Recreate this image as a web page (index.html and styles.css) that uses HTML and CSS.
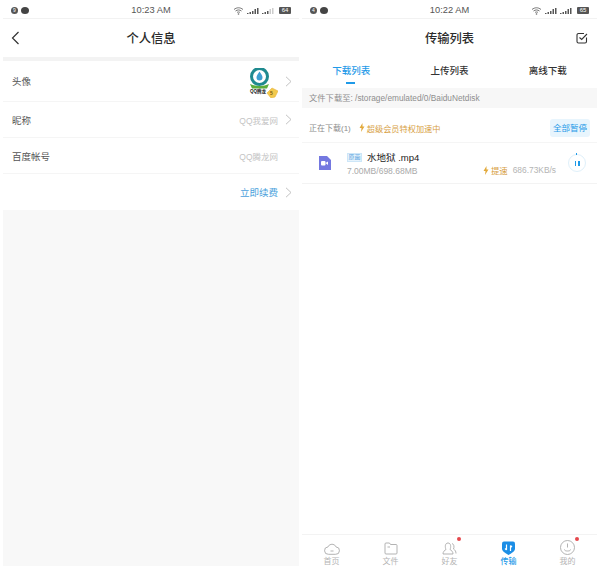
FILE: index.html
```html
<!DOCTYPE html>
<html>
  <head>
    <title>Screens</title>
    <link rel="stylesheet" href="styles.css">
  </head>
  <body>
    <div class="screen screen-left">
      <div class="status">
        <div class="dots"><span class="dot">9</span><span class="dot wide"></span></div>
        <div class="clock">10:23 AM</div>
        <div class="signals">
          <svg width="11" height="8" viewBox="0 0 11 8"><path d="M1 2.5C3.8 .2 7.2 .2 10 2.5M2.500 4C4.400 2.600 6.600 2.600 8.500 4M4 5.500C5 4.800 6 4.800 7 5.500" fill="none" stroke="#666" stroke-width=".9"/><circle cx="5.500" cy="7" r=".8" fill="#666"/></svg>
          <svg width="12" height="6" viewBox="0 0 12 6"><path d="M0 5h1.500v1H0zM2.500 4H4v2H2.500zM5 3h1.500v3H5zM7.500 1H9v5H7.500zM10 0h1.500v6H10z" fill="#555"/></svg>
          <svg width="12" height="6" viewBox="0 0 12 6"><path d="M0 5h1.500v1H0zM2.500 4H4v2H2.500zM5 3h1.500v3H5z" fill="#555"/><path d="M7.500 1H9v5H7.500zM10 0h1.500v6H10z" fill="#ccc"/></svg>
          <span class="battery">64</span>
        </div>
      </div>
      <div class="head">
        <svg class="back" width="9" height="14" viewBox="0 0 9 14"><path d="M7.500 1L1.500 7l6 6" fill="none" stroke="#333" stroke-width="1.200"/></svg>
        <div class="title">个人信息</div>
      </div>
      <div class="strip"></div>
      <div class="row row-first">
        <span class="label">头像</span>
        <div class="side">
          <div class="logo">
            <svg width="28" height="30" viewBox="0 0 28 30">
              <path d="M0 16c5 2.500 14 2.500 19 0l-2 4.500H2z" fill="#5cae3c"/>
              <circle cx="9.500" cy="8.500" r="8" fill="#fff" stroke="#1f8a8f" stroke-width="3"/>
              <path d="M9.500 3.500c2 3 3 4.500 3 6a3 3 0 0 1-6 0c0-1.500 1-3 3-6z" fill="#3d9ed0"/>
              <path d="M22 20l6 3-3 6-4 1-4-5z" fill="#f2c94c" stroke="#e8b23a" stroke-width=".6"/>
            </svg>
            <span class="logo-text">QQ腾龙</span>
            <span class="logo-num">5</span>
          </div>
          <svg class="chev" width="7" height="11" viewBox="0 0 7 11"><path d="M1 .8l5 4.700-5 4.700" fill="none" stroke="#bbb" stroke-width=".9"/></svg>
        </div>
      </div>
      <div class="row">
        <span class="label">昵称</span>
        <div class="side">
          <span class="value">QQ我爱网</span>
          <svg class="chev" width="7" height="11" viewBox="0 0 7 11"><path d="M1 .8l5 4.700-5 4.700" fill="none" stroke="#bbb" stroke-width=".9"/></svg>
        </div>
      </div>
      <div class="row">
        <span class="label">百度帐号</span>
        <div class="side">
          <span class="value">QQ腾龙网</span>
          <span class="chev-space"></span>
        </div>
      </div>
      <div class="row row-last">
        <span></span>
        <div class="side">
          <span class="renew">立即续费</span>
          <svg class="chev" width="7" height="11" viewBox="0 0 7 11"><path d="M1 .8l5 4.700-5 4.700" fill="none" stroke="#bbb" stroke-width=".9"/></svg>
        </div>
      </div>
      <div class="fill"></div>
    </div>

    <div class="screen">
      <div class="status">
        <div class="dots"><span class="dot">4</span><span class="dot wide"></span></div>
        <div class="clock">10:22 AM</div>
        <div class="signals">
          <svg width="11" height="8" viewBox="0 0 11 8"><path d="M1 2.500C3.800 .2 7.200 .2 10 2.500M2.500 4C4.400 2.600 6.600 2.600 8.500 4M4 5.500C5 4.800 6 4.800 7 5.500" fill="none" stroke="#666" stroke-width=".9"/><circle cx="5.500" cy="7" r=".8" fill="#666"/></svg>
          <svg width="12" height="6" viewBox="0 0 12 6"><path d="M0 5h1.500v1H0zM2.500 4H4v2H2.500zM5 3h1.500v3H5zM7.500 1H9v5H7.500zM10 0h1.500v6H10z" fill="#555"/></svg>
          <svg width="12" height="6" viewBox="0 0 12 6"><path d="M0 5h1.500v1H0zM2.500 4H4v2H2.500zM5 3h1.500v3H5zM7.500 1H9v5H7.500zM10 0h1.500v6H10z" fill="#555"/></svg>
          <span class="battery">65</span>
        </div>
      </div>
      <div class="head head-top">
        <div class="title">传输列表</div>
        <svg class="check" width="12" height="12" viewBox="0 0 12 12"><path d="M10.500 5.500V9.500a1.500 1.500 0 0 1-1.500 1.500H2.500A1.500 1.500 0 0 1 1 9.500V3a1.500 1.500 0 0 1 1.500-1.500H8" fill="none" stroke="#333" stroke-width="1.100"/><path d="M3.500 5.500l2.200 2L11 2" fill="none" stroke="#333" stroke-width="1.100"/></svg>
      </div>
      <div class="tabs">
        <div class="tab tab-on">下载列表</div>
        <div class="tab">上传列表</div>
        <div class="tab">离线下载</div>
      </div>
      <div class="path">文件下载至: /storage/emulated/0/BaiduNetdisk</div>
      <div class="running">
        <span class="running-label">正在下载(1)</span>
        <svg class="bolt" width="6" height="9" viewBox="0 0 6 9"><path d="M3.500 0L.5 5h2L2 9l3.500-5.500h-2z" fill="#e2a93b"/></svg>
        <span class="vip">超级会员特权加速中</span>
        <span class="pause-all">全部暂停</span>
      </div>
      <div class="item">
        <svg class="file" width="13" height="14" viewBox="0 0 13 14"><path d="M1 0h8l4 4v10H1z" fill="#7478e0"/><rect x="3" y="5" width="4.500" height="4.500" rx="1" fill="#fff"/><path d="M7.500 7l2.500-1.500v3.500z" fill="#fff"/></svg>
        <div class="item-main">
          <div class="item-name"><span class="tag">原画</span>水地狱 .mp4</div>
          <div class="item-size">7.00MB/698.68MB</div>
        </div>
        <div class="item-speed">
          <svg class="bolt" width="6" height="9" viewBox="0 0 6 9"><path d="M3.500 0L.5 5h2L2 9l3.500-5.500h-2z" fill="#e2a93b"/></svg>
          <span class="boost">提速</span>
          <span class="rate">686.73KB/s</span>
        </div>
        <div class="pause"><span></span><span></span></div>
      </div>
      <div class="space"></div>
      <div class="nav">
        <div class="nav-item">
          <svg width="16" height="13" viewBox="0 0 16 13"><path d="M4.500 12.300a3.700 3.700 0 0 1-.5-7.400 4.300 4.300 0 0 1 8 0 3.700 3.700 0 0 1-.5 7.400zM6.500 9h3" fill="none" stroke="#aaa" stroke-width=".9"/></svg>
          <span>首页</span>
        </div>
        <div class="nav-item">
          <svg width="14" height="13" viewBox="0 0 14 13"><path d="M1 2a1 1 0 0 1 1-1h3.500l1 1.500H12a1 1 0 0 1 1 1V11a1 1 0 0 1-1 1H2a1 1 0 0 1-1-1zM3.500 5H6" fill="none" stroke="#aaa" stroke-width=".9"/></svg>
          <span>文件</span>
        </div>
        <div class="nav-item">
          <svg width="15" height="13" viewBox="0 0 15 13"><path d="M1 12c0-2.500 1.500-3.500 3-4.500C2.800 5 3 1 6 1s3.200 4 2 6.500c1.500 1 3 2 3 4.500zM10 1.500c2 .5 2.500 3.500 1.500 5.500 1.500 1 2.500 2.200 2.500 4.500" fill="none" stroke="#aaa" stroke-width=".9"/></svg>
          <span>好友</span>
          <i class="badge"></i>
        </div>
        <div class="nav-item nav-on">
          <svg width="13" height="14" viewBox="0 0 13 14"><path d="M0 2.500Q0 .5 2 .5h9q2 0 2 2V8q0 2.500-6.500 6Q0 10.500 0 8z" fill="#1c8ee6"/><path d="M4.500 3.500V9M3 7.500L4.500 9M8.500 10V4.500M10 6L8.500 4.500" fill="none" stroke="#fff" stroke-width="1.200"/></svg>
          <span>传输</span>
        </div>
        <div class="nav-item">
          <svg width="15" height="15" viewBox="0 0 15 15"><circle cx="7.500" cy="7.500" r="7" fill="none" stroke="#aaa" stroke-width=".9"/><path d="M7.500 3.500V7.500M4.500 9.500c0 1 1 1.500 3 1.500s3-.5 3-1.500" fill="none" stroke="#aaa" stroke-width=".9"/></svg>
          <span>我的</span>
          <i class="badge"></i>
        </div>
      </div>
    </div>
  </body>
</html>
```

FILE: styles.css
```css
* {
  box-sizing: border-box;
}
html,
body {
  margin: 0;
  height: 569px;
  overflow: hidden;
  background: #fff;
}
body {
  display: flex;
  gap: 3px;
  padding: 0 3px 3px;
  font-family: "Liberation Sans", "Noto Sans CJK SC", sans-serif;
  color: #333;
}
.screen {
  width: 295px;
  flex: none;
  display: flex;
  flex-direction: column;
  position: relative;
}
.screen-left {
  width: 296px;
}
.status {
  height: 19px;
  flex: none;
  display: flex;
  align-items: center;
  justify-content: space-between;
  padding: 3px 8px 0 8px;
  border-bottom: 1px solid #f2f2f2;
  position: relative;
}
.dots {
  display: flex;
  gap: 3px;
}
.dot {
  width: 7px;
  height: 7px;
  border-radius: 50%;
  background: #555;
  color: #fff;
  font-size: 5px;
  line-height: 7px;
  text-align: center;
}
.dot.wide {
  width: 8px;
  background: #444;
}
.clock {
  position: absolute;
  left: 0;
  right: 0;
  top: 5px;
  text-align: center;
  font-size: 9.3px;
  color: #555;
}
.signals {
  display: flex;
  align-items: center;
  gap: 3px;
}
.battery {
  width: 12px;
  height: 7px;
  margin-left: 2px;
  background: #555;
  color: #fff;
  font-size: 6px;
  line-height: 7px;
  text-align: center;
  border-radius: 1px;
}
.head {
  height: 38px;
  flex: none;
  display: flex;
  align-items: center;
  justify-content: center;
  position: relative;
}
.title {
  font-size: 12.3px;
  color: #2b2b2b;
  font-weight: 500;
}
.back {
  position: absolute;
  left: 8px;
  top: 12px;
}
.check {
  position: absolute;
  right: 9px;
  top: 13px;
}
.strip {
  height: 4px;
  flex: none;
  background: #f3f3f3;
}
.row {
  height: 36px;
  flex: none;
  display: flex;
  align-items: center;
  justify-content: space-between;
  padding: 0 7px 0 9px;
  border-bottom: 1px solid #f5f5f5;
}
.row-first {
  height: 41px;
}
.row-last {
  border-bottom: 0;
}
.label {
  font-size: 9.5px;
  color: #555;
}
.side {
  display: flex;
  align-items: center;
}
.value {
  font-size: 8.5px;
  color: #c4c4c4;
}
.renew {
  font-size: 9.5px;
  color: #4a9fdc;
}
.chev {
  margin-left: 7px;
}
.chev-space {
  width: 14px;
}
.logo {
  width: 28px;
  height: 30px;
  margin-top: 4px;
  position: relative;
}
.logo-text {
  position: absolute;
  left: 0;
  top: 20px;
  font-size: 4.5px;
  font-weight: 700;
  color: #222;
}
.logo-num {
  position: absolute;
  left: 20px;
  top: 22px;
  font-size: 5px;
  font-weight: 700;
  color: #7a5a10;
}
.fill {
  flex: 1;
  background: #f8f8f8;
}
.tabs {
  height: 31px;
  flex: none;
  display: flex;
}
.tab {
  flex: 1;
  text-align: center;
  font-size: 9.5px;
  font-weight: 500;
  line-height: 14px;
  padding-top: 7px;
  color: #333;
  position: relative;
}
.tab-on {
  color: #1f9ae8;
}
.tab-on::after {
  content: "";
  position: absolute;
  left: 50%;
  bottom: 4px;
  width: 9px;
  height: 2px;
  margin-left: -5px;
  background: #1f9ae8;
}
.path {
  height: 20px;
  flex: none;
  background: #f7f7f7;
  font-size: 8.3px;
  line-height: 20px;
  padding-left: 7px;
  color: #8e8e8e;
}
.running {
  height: 35px;
  flex: none;
  display: flex;
  align-items: center;
  padding: 5px 7px 0;
  border-bottom: 1px solid #f5f5f5;
}
.running-label {
  font-size: 8px;
  color: #8c8c8c;
}
.running .bolt {
  margin-left: 8px;
}
.vip {
  font-size: 8.2px;
  color: #d7a044;
  margin-left: 2px;
}
.pause-all {
  margin-left: auto;
  padding: 0 3px;
  height: 18px;
  line-height: 18px;
  border-radius: 3px;
  background: #e8f5fd;
  font-size: 8.5px;
  color: #1f9ae8;
}
.item {
  height: 41px;
  flex: none;
  display: flex;
  align-items: center;
  padding: 0 11px 0 16px;
  border-bottom: 1px solid #f3f3f3;
}
.item-main {
  margin-left: 16px;
  padding-top: 2px;
}
.item-name {
  display: flex;
  align-items: center;
  font-size: 9.5px;
  line-height: 13px;
  color: #222;
}
.tag {
  width: 15px;
  height: 9px;
  text-align: center;
  font-size: 6px;
  color: #5aa5e0;
  background: #e6f3fc;
  border: 1px solid #cde6f8;
  line-height: 7px;
  margin-right: 5px;
}
.item-size {
  font-size: 8.5px;
  line-height: 11px;
  margin-top: 2px;
  color: #a9a9a9;
}
.item-speed {
  margin-left: auto;
  margin-top: 14px;
  display: flex;
  align-items: center;
  font-size: 8.4px;
}
.boost {
  color: #d7a044;
  margin-left: 2px;
}
.rate {
  color: #b4b4b4;
  margin-left: 5px;
}
.pause {
  width: 18px;
  height: 18px;
  margin-left: 12px;
  border: 1.5px solid #dff0fa;
  border-radius: 50%;
  display: flex;
  align-items: center;
  justify-content: center;
  gap: 2px;
  position: relative;
}
.pause::before {
  content: "";
  position: absolute;
  left: 7px;
  top: -2px;
  width: 1px;
  height: 2px;
  background: #1f9ae8;
}
.pause span {
  width: 1.5px;
  height: 5px;
  background: #1f9ae8;
}
.space {
  flex: 1;
}
.nav {
  height: 32px;
  flex: none;
  display: flex;
  border-top: 1px solid #f3f3f3;
}
.nav-item {
  flex: 1;
  display: flex;
  flex-direction: column;
  align-items: center;
  justify-content: flex-end;
  gap: 2px;
  position: relative;
  font-size: 8px;
  line-height: 9px;
  color: #b4b4b4;
}
.nav-on {
  color: #1f9ae8;
  font-weight: 500;
}
.badge {
  position: absolute;
  left: 37px;
  top: 2px;
  width: 4px;
  height: 4px;
  border-radius: 50%;
  background: #e5484d;
}
```
